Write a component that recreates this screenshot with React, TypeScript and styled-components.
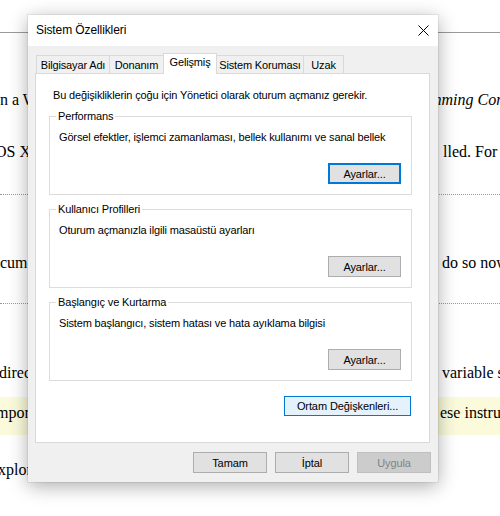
import styled, { createGlobalStyle } from "styled-components";

const GlobalStyle = createGlobalStyle`
  html, body {
    margin: 0;
    padding: 0;
    background: #ffffff;
  }
  body {
    font-family: "Liberation Serif", "Times New Roman", serif;
  }
`;

const UI_FONT = `"Liberation Sans", Arial, sans-serif`;

/* ---------- page behind the dialog ---------- */

const Page = styled.div`
  position: relative;
  width: 500px;
  height: 516px;
  overflow: hidden;
  font-size: 16px;
  line-height: 20px;
  color: #000;
`;

const Rule = styled.hr<{ $dotted?: boolean; $top: number }>`
  margin: ${(p) => p.$top}px 0 0;
  border: 0;
  border-top: 1px ${(p) => (p.$dotted ? "dotted" : "solid")} #9a9a9a;
  height: 0;
`;

const TextLine = styled.div<{ $top: number }>`
  display: grid;
  grid-template-columns: 440px 1fr;
  margin-top: ${(p) => p.$top}px;
  white-space: nowrap;
  overflow: hidden;
`;

const Band = styled.div<{ $top: number }>`
  margin-top: ${(p) => p.$top}px;
  padding: 6px 0 12px;
  background: #fbfbdc;
`;

const LeftBit = styled.span<{ $shift: number }>`
  overflow: hidden;
  text-indent: ${(p) => p.$shift}px;
`;

const RightBit = styled.span<{ $shift: number }>`
  margin-left: ${(p) => p.$shift}px;
`;

/* ---------- the dialog ---------- */

const Dialog = styled.div`
  position: absolute;
  left: 28px;
  top: 15px;
  width: 410px;
  height: 467px;
  display: flex;
  flex-direction: column;
  background: #f0f0f0;
  box-shadow: 0 4px 18px rgba(0, 0, 0, 0.33), 0 0 0 1px rgba(0, 0, 0, 0.06);
  font-family: ${UI_FONT};
  font-size: 11px;
  letter-spacing: -0.15px;
  line-height: 15px;
  color: #000;
`;

const TitleBar = styled.div`
  height: 31px;
  flex: none;
  display: flex;
  align-items: center;
  justify-content: space-between;
  padding-left: 8px;
  background: #ffffff;
`;

const Title = styled.span`
  font-size: 12px;
  letter-spacing: -0.1px;
`;

const CloseBox = styled.div`
  width: 30px;
  height: 31px;
  display: flex;
  align-items: center;
  justify-content: center;
`;

const Body = styled.div`
  flex: 1;
  display: flex;
  flex-direction: column;
  padding: 7px 8px 0 7px;
  min-height: 0;
`;

const TabStrip = styled.div`
  height: 20px;
  flex: none;
  display: flex;
  align-items: flex-end;
  padding-left: 1px;
`;

const Tab = styled.div<{ $w: number; $active?: boolean }>`
  box-sizing: border-box;
  width: ${(p) => p.$w}px;
  height: ${(p) => (p.$active ? 21 : 18)}px;
  margin-left: -1px;
  margin-bottom: ${(p) => (p.$active ? -1 : 0)}px;
  padding-top: ${(p) => (p.$active ? 1 : 2)}px;
  border: 1px solid #d9d9d9;
  border-bottom: 0;
  background: ${(p) => (p.$active ? "#ffffff" : "#f0f0f0")};
  position: relative;
  z-index: ${(p) => (p.$active ? 1 : 0)};
  text-align: center;
  white-space: nowrap;

  &:first-child {
    margin-left: 0;
  }
`;

const Panel = styled.div`
  flex: 1;
  display: flex;
  flex-direction: column;
  align-items: stretch;
  padding: 14px 17px 0 13px;
  background: #ffffff;
  border: 1px solid #d9d9d9;
`;

const Intro = styled.p`
  margin: 0 0 6px 4px;
`;

const Groups = styled.div`
  display: flex;
  flex-direction: column;
  gap: 7px;
`;

const Group = styled.fieldset`
  margin: 0;
  padding: 6px 10px 10px 6px;
  border: 1px solid #dcdcdc;
  display: flex;
  flex-direction: column;
  align-items: flex-start;
  min-width: 0;
`;

const Legend = styled.legend`
  padding: 0 2px;
  line-height: 15px;
`;

const GroupText = styled.div`
  padding-left: 3px;
  margin-bottom: 18px;
  white-space: nowrap;
`;

const Button = styled.button<{ $focused?: boolean; $w?: number; $h?: number }>`
  box-sizing: border-box;
  width: ${(p) => p.$w ?? 73}px;
  height: ${(p) => p.$h ?? 21}px;
  padding: 0;
  font-family: ${UI_FONT};
  font-size: 11px;
  letter-spacing: -0.1px;
  color: #000;
  background: #e1e1e1;
  border: ${(p) => (p.$focused ? "2px solid #0078d7" : "1px solid #adadad")};
  border-radius: 0;

  &:disabled {
    color: #838383;
    background: #cccccc;
    border-color: #bfbfbf;
  }
`;

const GroupButton = styled(Button)`
  align-self: flex-end;
`;

const EnvButton = styled(Button)`
  align-self: flex-end;
  margin: 15px 1px 0 0;
  background: #e5f1fb;
  border-color: #0078d7;
`;

const Footer = styled.div`
  flex: none;
  display: flex;
  justify-content: flex-end;
  gap: 8px;
  padding: 9px 0 9px;
  margin-right: -1px;
`;

function CloseIcon() {
  return (
    <svg width="11" height="11" viewBox="0 0 11 11">
      <path d="M0.5 0.5 L10.5 10.5 M10.5 0.5 L0.5 10.5" stroke="#000" strokeWidth="1" fill="none" />
    </svg>
  );
}

const tabs = [
  { label: "Bilgisayar Adı", w: 74 },
  { label: "Donanım", w: 55 },
  { label: "Gelişmiş", w: 54, active: true },
  { label: "Sistem Koruması", w: 88 },
  { label: "Uzak", w: 41 },
];

const groups = [
  {
    title: "Performans",
    text: "Görsel efektler, işlemci zamanlaması, bellek kullanımı ve sanal bellek",
    focused: true,
  },
  { title: "Kullanıcı Profilleri", text: "Oturum açmanızla ilgili masaüstü ayarları" },
  { title: "Başlangıç ve Kurtarma", text: "Sistem başlangıcı, sistem hatası ve hata ayıklama bilgisi" },
];

export default function App() {
  return (
    <>
      <GlobalStyle />
      <Page>
        <Rule $top={32} />
        <TextLine $top={57}>
          <LeftBit $shift={-8}>on a Windows computer</LeftBit>
          <RightBit $shift={-10}>
            <i>mming Concepts</i>
          </RightBit>
        </TextLine>
        <TextLine $top={32}>
          <LeftBit $shift={-5}>OS X and Linux</LeftBit>
          <RightBit $shift={3}>lled. For more</RightBit>
        </TextLine>
        <Rule $dotted $top={32} />
        <TextLine $top={58}>
          <LeftBit $shift={0}>cument</LeftBit>
          <RightBit $shift={2}>do so now</RightBit>
        </TextLine>
        <Rule $dotted $top={30} />
        <TextLine $top={59}>
          <LeftBit $shift={-1}>directory</LeftBit>
          <RightBit $shift={2}>variable set</RightBit>
        </TextLine>
        <Band $top={14}>
          <TextLine $top={0}>
            <LeftBit $shift={-4}>mportant</LeftBit>
            <RightBit $shift={0}>ese instructions</RightBit>
          </TextLine>
        </Band>
        <TextLine $top={25}>
          <LeftBit $shift={-2}>xplorer</LeftBit>
          <RightBit $shift={0}></RightBit>
        </TextLine>

        <Dialog>
          <TitleBar>
            <Title>Sistem Özellikleri</Title>
            <CloseBox>
              <CloseIcon />
            </CloseBox>
          </TitleBar>
          <Body>
            <TabStrip>
              {tabs.map((t) => (
                <Tab key={t.label} $w={t.w} $active={t.active}>
                  {t.label}
                </Tab>
              ))}
            </TabStrip>
            <Panel>
              <Intro>Bu değişikliklerin çoğu için Yönetici olarak oturum açmanız gerekir.</Intro>
              <Groups>
                {groups.map((g) => (
                  <Group key={g.title}>
                    <Legend>{g.title}</Legend>
                    <GroupText>{g.text}</GroupText>
                    <GroupButton $focused={g.focused}>Ayarlar...</GroupButton>
                  </Group>
                ))}
              </Groups>
              <EnvButton $w={127} $h={20}>
                Ortam Değişkenleri...
              </EnvButton>
            </Panel>
            <Footer>
              <Button $w={74}>Tamam</Button>
              <Button $w={74}>İptal</Button>
              <Button $w={74} disabled>
                Uygula
              </Button>
            </Footer>
          </Body>
        </Dialog>
      </Page>
    </>
  );
}
